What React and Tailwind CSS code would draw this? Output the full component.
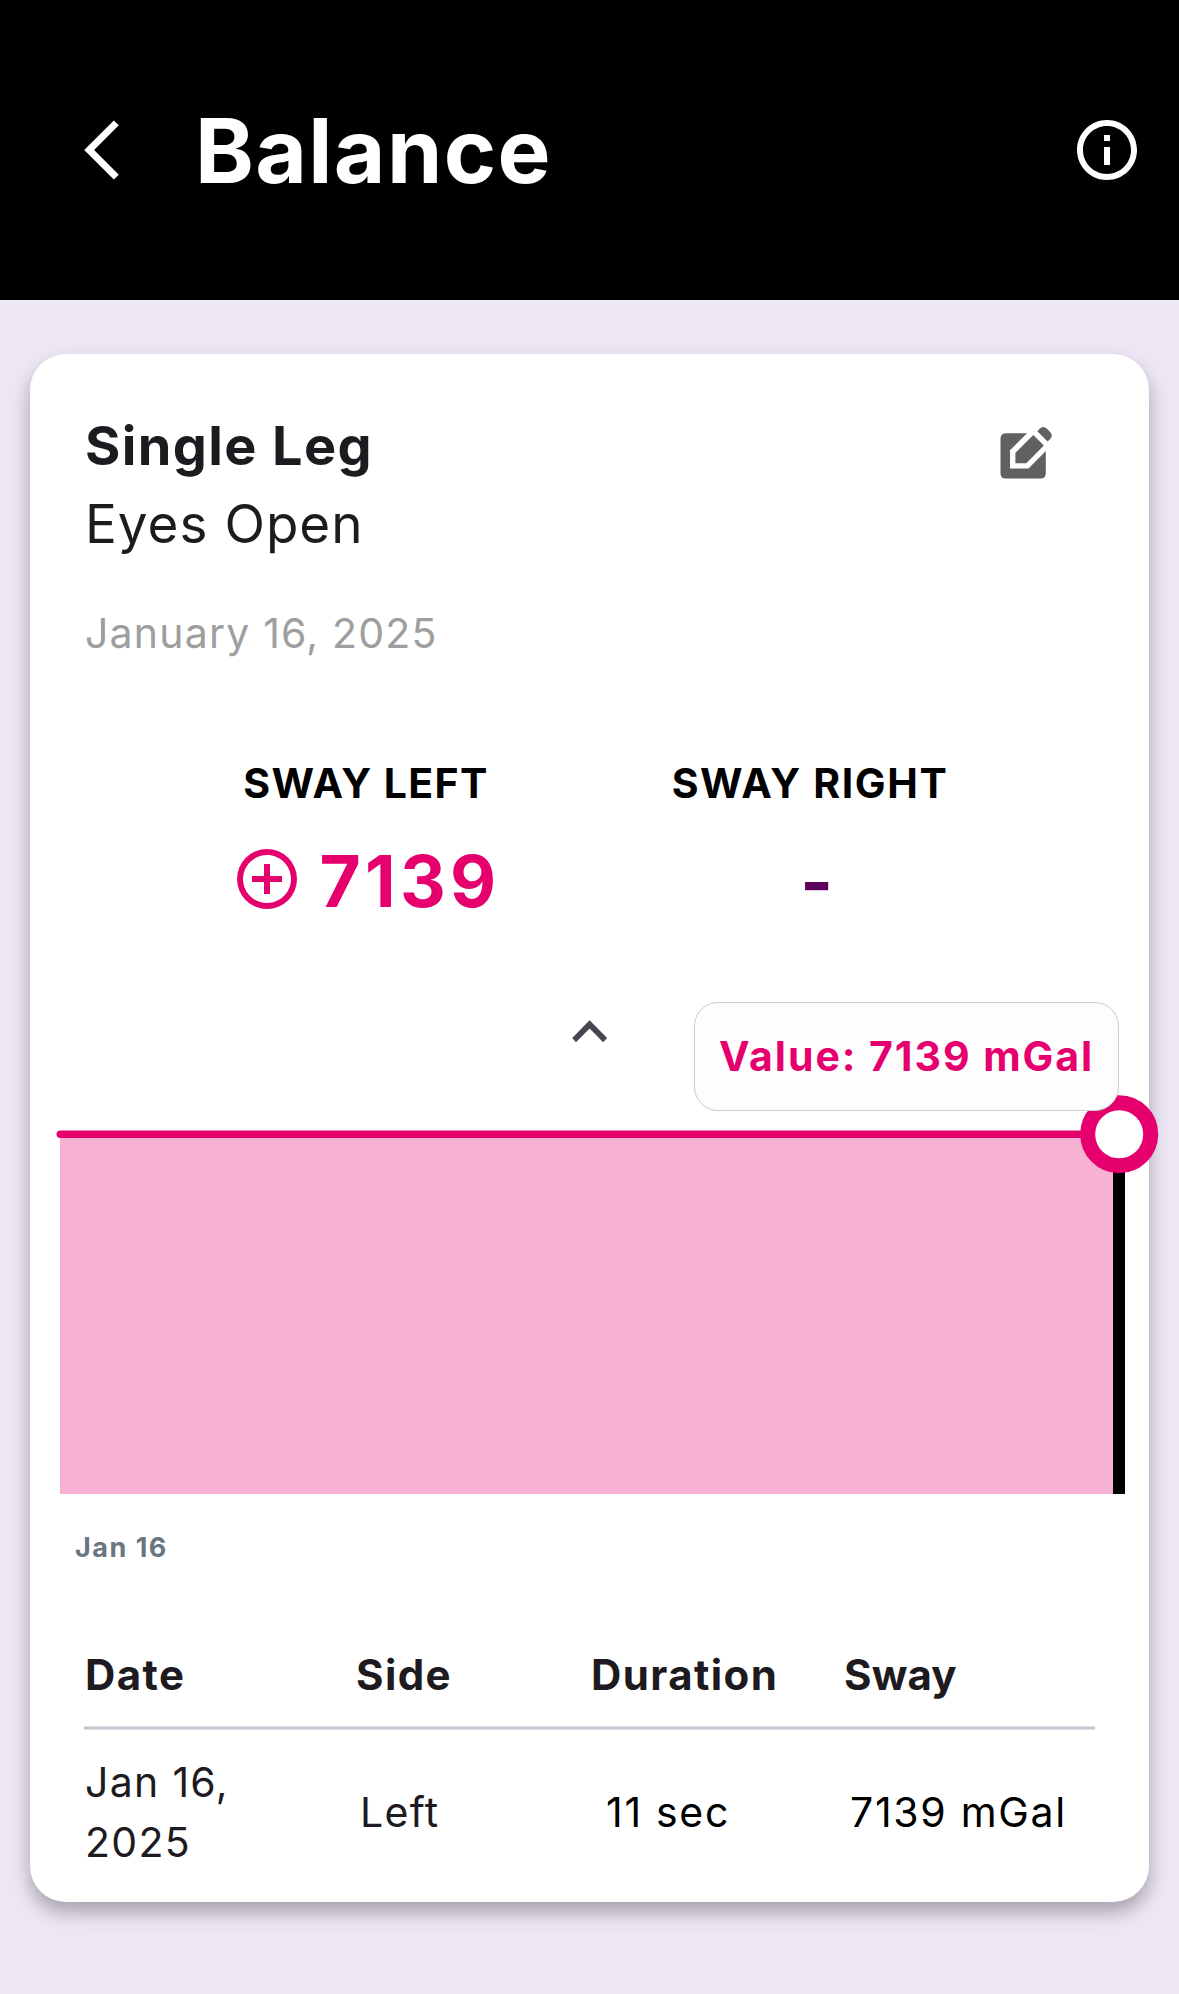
const BackIcon = () => (
  <svg viewBox="0 0 36 60" className="h-[60px] w-9" fill="#fff">
    <path d="M29.8.6 34.8 5.3 10.1 30l24.7 24.7-5 4.7L.2 30z" />
  </svg>
);

const InfoIcon = () => (
  <svg viewBox="0 0 24 24" className="size-[72px]" fill="#fff">
    <path d="M11 7h2v2h-2zm0 4h2v6h-2zm1-9C6.48 2 2 6.48 2 12s4.48 10 10 10 10-4.48 10-10S17.52 2 12 2zm0 18c-4.41 0-8-3.59-8-8s3.59-8 8-8 8 3.59 8 8-3.59 8-8 8z" />
  </svg>
);

const EditIcon = () => (
  <svg viewBox="0 0 54 54" className="size-[54px]">
    <rect x="1.5" y="7.3" width="45.3" height="45.3" rx="5" fill="#616161" />
    <path d="M11 24.3 36.3-1 57 14.7 29.5 42.5H11z" fill="#fff" />
    <path d="M16.4 26.8 34.3 9 44.9 19.5 27.3 37.2H16.4z" fill="#616161" />
    <path
      d="M38.3 5.2 40.9 2.6Q44.2-.6 47.6 2.5L51.1 6Q54.3 9.4 51.2 13L48.6 15.6z"
      fill="#616161"
    />
  </svg>
);

const PlusIcon = () => (
  <svg viewBox="0 0 24 24" className="size-[72px]" fill="#e6006e">
    <path d="M12 20c-4.41 0-8-3.59-8-8s3.59-8 8-8 8 3.59 8 8-3.59 8-8 8m0-18A10 10 0 0 0 2 12a10 10 0 0 0 10 10 10 10 0 0 0 10-10A10 10 0 0 0 12 2m1 5h-2v4H7v2h4v4h2v-4h4v-2h-4V7z" />
  </svg>
);

const CollapseIcon = () => (
  <svg viewBox="0 0 36 23" className="h-[23px] w-9" fill="#49454f">
    <path d="M17.6.2 35.1 18 31.2 22.3 17.6 8.5 4 22.3.2 18z" />
  </svg>
);

function Chart() {
  return (
    <div className="relative mt-[52px]">
      <svg
        viewBox="0 0 1119 399"
        className="block h-[399px] w-[1119px] overflow-visible"
      >
        <rect x="30" y="39" width="1059" height="360" fill="#f7b1d3" />
        <rect x="1083" y="39" width="12" height="360" fill="#000" />
        <path
          d="M30.3 39.2H1089"
          stroke="#e6006e"
          strokeWidth="7.5"
          strokeLinecap="round"
        />
        <circle
          cx="1089.2"
          cy="39.2"
          r="31.5"
          fill="#fff"
          stroke="#e6006e"
          strokeWidth="15"
        />
      </svg>
      <div className="absolute -top-[93px] left-[664px] flex h-[109px] w-[425px] items-center justify-center rounded-[24px] border border-[#cccccc] bg-[#fdfdfd] pb-px">
        <span className="text-[41px] leading-[60px] font-bold tracking-[1.95px] whitespace-nowrap text-[#e6006e]">
          Value: 7139 mGal
        </span>
      </div>
    </div>
  );
}

function Table() {
  return (
    <div className="mt-[76px] ml-[54px] w-[1011px] text-[41px] leading-[60px] text-[#1d1b20]">
      <div className="grid grid-cols-[271px_235px_253px_1fr] pt-px pl-px text-[42px] font-bold tracking-[1.4px]">
        <span>Date</span>
        <span>Side</span>
        <span>Duration</span>
        <span className="tracking-[0.2px]">Sway</span>
      </div>
      <div className="mt-[21px] h-1 border-y border-[#e5e2e9] bg-[#cac4d0]" />
      <div className="mt-[22px] grid grid-cols-[271px_235px_253px_1fr] items-center pl-px tracking-[1.7px]">
        <span className="w-[160px] tracking-[1.3px]">Jan 16, 2025</span>
        <span className="pl-1 tracking-[1.3px]">Left</span>
        <span className="pl-[15px] text-black">11 sec</span>
        <span className="pl-1.5 whitespace-nowrap text-black">7139 mGal</span>
      </div>
    </div>
  );
}

export default function App() {
  return (
    <div className="h-[1994px] w-[1179px] overflow-hidden bg-[#ede7f6] font-['Inter',sans-serif]">
      <header className="flex h-[300px] items-center bg-black pr-9 pl-[84px]">
        <BackIcon />
        <h1 className="ml-[75px] flex-1 pt-[2px] text-[89px] leading-[100px] font-bold tracking-[1.4px] text-white">
          Balance
        </h1>
        <InfoIcon />
      </header>

      <main className="mx-[30px] mt-[54px] h-[1548px] rounded-[36px] bg-white pt-[53px] shadow-[0_10px_15px_rgba(0,0,0,0.2),0_10px_30px_rgba(0,0,0,0.12)]">
        <div className="flex justify-between pr-24 pl-[55px] text-[#1d1b20]">
          <div>
            <h2 className="text-[54px] leading-[78px] font-bold tracking-[1.4px]">
              Single Leg
            </h2>
            <p className="text-[53px] leading-[78px] tracking-[1px]">
              Eyes Open
            </p>
            <p className="mt-10 text-[41px] leading-[60px] tracking-[1.2px] text-[#9e9e9e]">
              January 16, 2025
            </p>
          </div>
          <div className="mt-[19px]">
            <EditIcon />
          </div>
        </div>

        <div className="mt-[90px] ml-[114px] flex">
          <div className="w-[444px]">
            <p className="text-center text-[41px] leading-[60px] font-bold tracking-[1.4px]">
              SWAY LEFT
            </p>
            <div className="mt-[22px] flex h-[88px] items-center justify-center gap-4">
              <PlusIcon />
              <span className="pt-[3px] text-[71px] leading-[88px] font-bold tracking-[4.3px] text-[#e6006e]">
                7139
              </span>
            </div>
          </div>
          <div className="w-[444px]">
            <p className="text-center text-[41px] leading-[60px] font-bold tracking-[1.6px]">
              SWAY RIGHT
            </p>
            <div className="mt-[22px] flex h-[88px] items-center justify-center pt-[5px] pl-[13px] text-[70px] leading-[88px] font-bold text-[#5c005c]">
              -
            </div>
          </div>
        </div>

        <div className="mt-[97px] flex justify-center">
          <CollapseIcon />
        </div>

        <Chart />
        <p className="mt-[34px] pl-[45px] text-[27px] leading-[40px] font-bold tracking-[1.5px] text-[#6b7680]">
          Jan 16
        </p>
        <Table />
      </main>
    </div>
  );
}
